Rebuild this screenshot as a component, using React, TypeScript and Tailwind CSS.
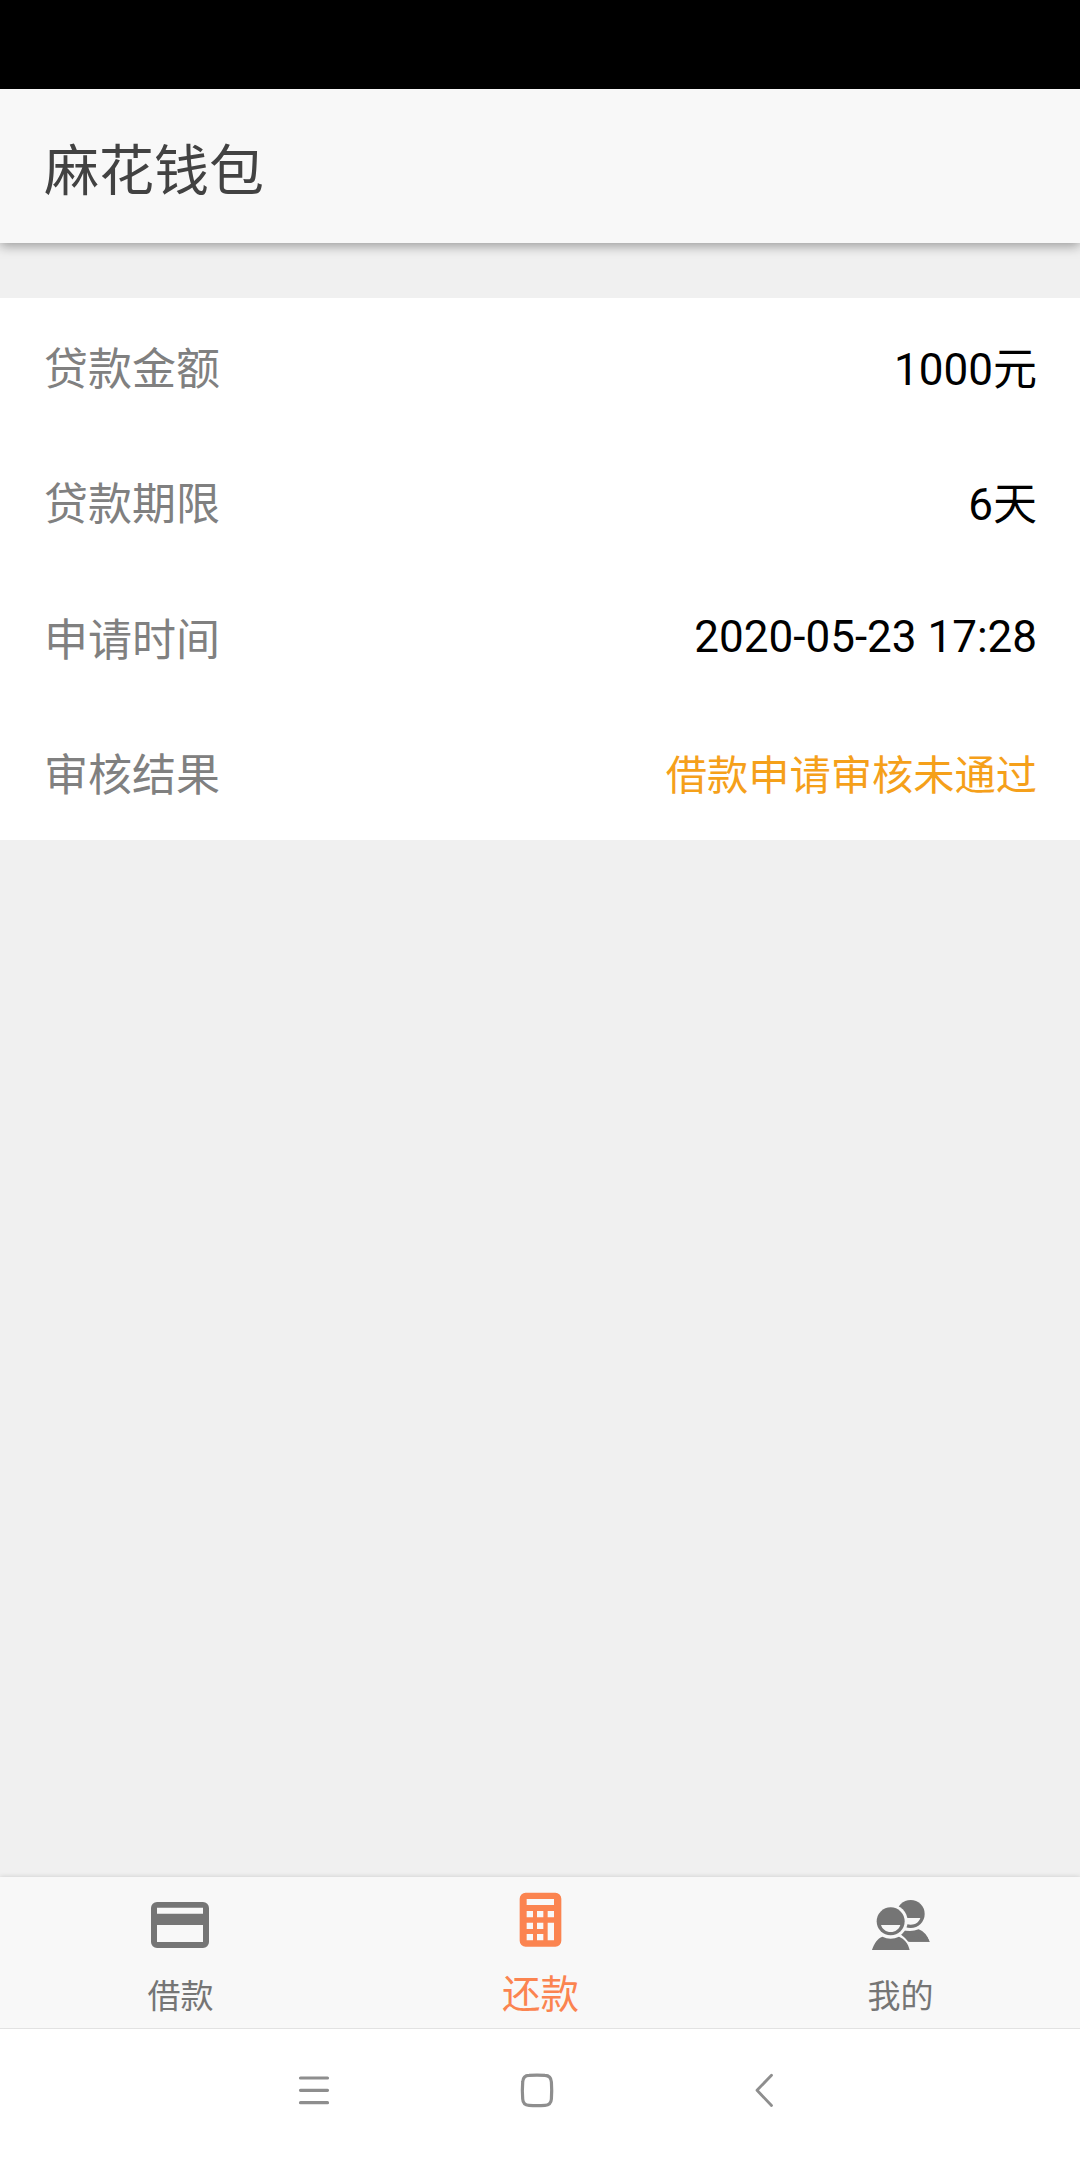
import type { ReactNode } from "react";
import clsx from "clsx";

const rows = [
    { label: "贷款金额", value: "1000元" },
    { label: "贷款期限", value: "6天" },
    { label: "申请时间", value: "2020-05-23 17:28", latin: true },
    { label: "审核结果", value: "借款申请审核未通过", warn: true },
];

function CardIcon() {
    return (
        <svg viewBox="0 0 180 186" className="h-[62px] w-[60px]" fill="currentColor">
            <path fillRule="evenodd" d="M21 36H159a18 18 0 0 1 18 18V156a18 18 0 0 1-18 18H21a18 18 0 0 1-18-18V54a18 18 0 0 1 18-18ZM21 53V71H159V53ZM21 105V156H159V105Z" />
        </svg>
    );
}

function CalculatorIcon() {
    return (
        <svg viewBox="0 0 180 186" className="h-[62px] w-[60px]" fill="currentColor">
            <path fillRule="evenodd" d="M47 8H136a18 18 0 0 1 18 18V152a18 18 0 0 1-18 18H47a18 18 0 0 1-18-18V26a18 18 0 0 1 18-18ZM50 27v18h82v-18ZM50 63v19h19v-19ZM81 63v19h19v-19ZM113 63v19h19v-19ZM50 98v19h19v-19ZM81 98v19h19v-19ZM113 98v53h19v-53ZM50 132v19h19v-19ZM81 132v19h19v-19Z" />
        </svg>
    );
}

function PeopleIcon() {
    return (
        <svg viewBox="0 0 180 186" className="h-[62px] w-[60px]">
            <circle cx="122" cy="72" r="42" fill="currentColor" />
            <path d="M93 84H151C147 97 136 104 122 104S97 97 93 84Z" fill="#f8f8f8" />
            <path d="M95 119Q122 127 146 118Q168 126 179 155H92Z" fill="currentColor" />
            <circle cx="62" cy="94" r="51" fill="#f8f8f8" />
            <path d="M0 189C7 157 20 144 36 132H88C105 140 117 155 124 175L119 189Z" fill="#f8f8f8" />
            <path d="M104 140L119 155H179L172 142Z" fill="currentColor" />
            <circle cx="62" cy="94" r="42" fill="currentColor" />
            <path d="M33 105H91C87 118 76 126 62 126S37 118 33 105Z" fill="#f8f8f8" />
            <path d="M6 180C12 160 23 145 37 140Q62 152 87 140C103 146 115 161 119 180Z" fill="currentColor" />
        </svg>
    );
}

function Tab({ icon, label, active }: { icon: ReactNode; label: string; active?: boolean }) {
    return (
        <div className={clsx("flex flex-1 flex-col items-center pt-[13px]", active ? "text-[#fb8450]" : "text-[#757575]")}>
            {icon}
            <span className={clsx("pl-px leading-[48px]", active ? "mt-[19px] text-[38.5px]" : "mt-[21px] text-[33px]")}>{label}</span>
        </div>
    );
}

export default function App() {
    return (
        <div className="flex h-[2158px] w-[1080px] flex-col bg-[#f0f0f0] font-[Roboto,'Noto_Sans_CJK_SC',sans-serif]">
            <div className="h-[89px] bg-black" />
            <header className="flex h-[154px] items-center bg-[#f8f8f8] px-11 pt-[11px] text-[55px] text-[#424242] shadow-[0_3px_11px_rgba(0,0,0,0.36)]">
                <h1 className="leading-none">麻花钱包</h1>
            </header>

            <main className="mt-[55px] flex-1">
                <div className="bg-white">
                    {rows.map((row) => (
                        <div key={row.label} className="flex h-[135.5px] items-center justify-between pt-2 pr-[43px] pl-11 text-[44px] leading-[64px]">
                            <span className="text-[#808080]">{row.label}</span>
                            <span className={clsx(row.warn ? "text-[41.25px] text-[#f5a01a]" : "text-black", row.latin && "pb-2")}>{row.value}</span>
                        </div>
                    ))}
                </div>
            </main>

            <nav className="flex h-[151px] bg-[#f8f8f8] shadow-[0_0_5px_rgba(0,0,0,0.16)]">
                <Tab icon={<CardIcon />} label="借款" />
                <Tab icon={<CalculatorIcon />} label="还款" active />
                <Tab icon={<PeopleIcon />} label="我的" />
            </nav>

            {/* system navigation */}
            <div className="flex h-[130px] border-t border-[#e2e2e2] bg-white pt-[43px] pl-[296px] text-[#8e8e8e]">
                <svg viewBox="0 0 36 36" className="mr-[186px] size-9" fill="none" stroke="currentColor" strokeWidth="3.2" strokeLinecap="round">
                    <path d="M4.5 6H31.5M4.5 18.3H31.5M4.5 30.7H31.5" />
                </svg>
                <svg viewBox="0 0 38 36" className="mr-[194px] h-9 w-[38px]" fill="none" stroke="currentColor" strokeWidth="3.2">
                    <path d="M11 3.4Q19 2.8 27 3.4Q33 3.6 33.4 10Q34 18.5 33.4 27Q33 33 27 33.3Q19 33.9 11 33.3Q5 33 4.7 27Q4 18.5 4.7 10Q5 3.6 11 3.4Z" />
                </svg>
                <svg viewBox="0 0 36 36" className="size-9" fill="none" stroke="currentColor" strokeWidth="2.8" strokeLinecap="round" strokeLinejoin="round">
                    <path d="M21.5 3.3L7 18.3L21.5 33.5" />
                </svg>
            </div>
        </div>
    );
}
